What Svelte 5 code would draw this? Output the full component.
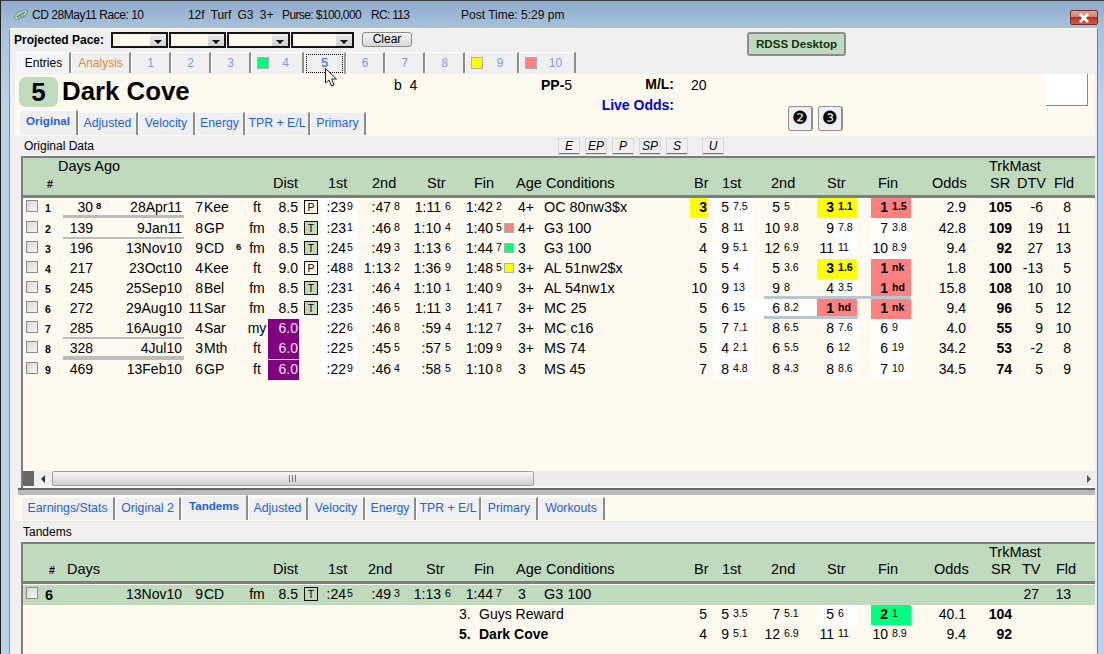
<script>
  const mainTabs = [
    { t: 'Entries', w: 54, c: 'blk' }, { t: 'Analysis', w: 60, c: 'org' },
    { t: '1', w: 40 }, { t: '2', w: 40 }, { t: '3', w: 40 },
    { t: '4', w: 53, s: 'g' }, { t: '5', w: 42, c: 'cur' }, { t: '6', w: 39 },
    { t: '7', w: 40 }, { t: '8', w: 40 }, { t: '9', w: 54, s: 'y' }, { t: '10', w: 57, s: 'r' }
  ];
  const subTabs = [
    { t: 'Original', w: 59, on: true }, { t: 'Adjusted', w: 60 }, { t: 'Velocity', w: 57 },
    { t: 'Energy', w: 50 }, { t: 'TPR + E/L', w: 65 }, { t: 'Primary', w: 56 }
  ];
  const lowTabs = [
    { t: 'Earnings/Stats', w: 94 }, { t: 'Original 2', w: 66 }, { t: 'Tandems', w: 67, on: true },
    { t: 'Adjusted', w: 60 }, { t: 'Velocity', w: 57 }, { t: 'Energy', w: 51 },
    { t: 'TPR + E/L', w: 65 }, { t: 'Primary', w: 57 }, { t: 'Workouts', w: 67 }
  ];
  const paceBtns = ['E', 'EP', 'P', 'SP', 'S', 'U'];
  const head1 = ['Dist', '1st', '2nd', 'Str', 'Fin', 'Age', 'Conditions', 'Br', '1st', '2nd', 'Str', 'Fin', 'Odds', 'SR', 'DTV', 'Fld'];
  const head2 = ['Days', 'Dist', '1st', '2nd', 'Str', 'Fin', 'Age', 'Conditions', 'Br', '1st', '2nd', 'Str', 'Fin', 'Odds', 'SR', 'TV', 'Fld'];

  const rows = [
    { n: 1, d: '30', ds: '8', date: '28Apr11', rn: '7', trk: 'Kee', surf: 'ft', dist: '8.5', box: 'P', t: [':23', '9', ':47', '8', '1:11', '6', '1:42', '2'], age: '4+', cond: 'OC 80nw3$x', br: '3', brc: 'y', p1: ['5', '7.5'], p2: ['5', '5'], p3: ['3', '1.1', 'y'], p4: ['1', '1.5', 'r'], odds: '2.9', sr: '105', dtv: '-6', fld: '8', bar: 'bar3' },
    { n: 2, d: '139', date: '9Jan11', rn: '8', trk: 'GP', surf: 'fm', dist: '8.5', box: 'T', t: [':23', '1', ':46', '8', '1:10', '4', '1:40', '5'], sw: 'r', age: '4+', cond: 'G3 100', br: '5', p1: ['8', '11'], p2: ['10', '9.8'], p3: ['9', '7.8'], p4: ['7', '3.8'], odds: '42.8', sr: '109', dtv: '19', fld: '11', bar: 'bar2', gap: true },
    { n: 3, d: '196', date: '13Nov10', rn: '9', trk: 'CD', ts: '6', surf: 'fm', dist: '8.5', box: 'T', t: [':24', '5', ':49', '3', '1:13', '6', '1:44', '7'], sw: 'g', age: '3', cond: 'G3 100', br: '4', p1: ['9', '5.1'], p2: ['12', '6.9'], p3: ['11', '11'], p4: ['10', '8.9'], odds: '9.4', sr: '92', dtv: '27', fld: '13' },
    { n: 4, d: '217', date: '23Oct10', rn: '4', trk: 'Kee', surf: 'ft', dist: '9.0', box: 'P', t: [':48', '8', '1:13', '2', '1:36', '9', '1:48', '5'], sw: 'y', age: '3+', cond: 'AL 51nw2$x', br: '5', p1: ['5', '4'], p2: ['5', '3.6'], p3: ['3', '1.6', 'y'], p4: ['1', 'nk', 'r'], odds: '1.8', sr: '100', dtv: '-13', fld: '5' },
    { n: 5, d: '245', date: '25Sep10', rn: '8', trk: 'Bel', surf: 'fm', dist: '8.5', box: 'T', t: [':23', '1', ':46', '4', '1:10', '1', '1:40', '9'], age: '3+', cond: 'AL 54nw1x', br: '10', p1: ['9', '13'], p2: ['9', '8'], p3: ['4', '3.5'], p4: ['1', 'hd', 'r'], odds: '15.8', sr: '108', dtv: '10', fld: '10', sbar: 'sbar1' },
    { n: 6, d: '272', date: '29Aug10', rn: '11', trk: 'Sar', surf: 'fm', dist: '8.5', box: 'T', t: [':23', '5', ':46', '5', '1:11', '3', '1:41', '7'], age: '3+', cond: 'MC 25', br: '5', p1: ['6', '15'], p2: ['6', '8.2', 'w'], p3: ['1', 'hd', 'r'], p4: ['1', 'nk', 'r'], odds: '9.4', sr: '96', dtv: '5', fld: '12', sbar: 'sbar2' },
    { n: 7, d: '285', date: '16Aug10', rn: '4', trk: 'Sar', surf: 'my', dist: '6.0', t: [':22', '6', ':46', '8', ':59', '4', '1:12', '7'], age: '3+', cond: 'MC c16', br: '5', p1: ['7', '7.1'], p2: ['8', '6.5'], p3: ['8', '7.6'], p4: ['6', '9'], odds: '4.0', sr: '55', dtv: '9', fld: '10', bar: 'bar2' },
    { n: 8, d: '328', date: '4Jul10', rn: '3', trk: 'Mth', surf: 'ft', dist: '6.0', t: [':22', '5', ':45', '5', ':57', '5', '1:09', '9'], age: '3+', cond: 'MS 74', br: '5', p1: ['4', '2.1'], p2: ['6', '5.5'], p3: ['6', '12'], p4: ['6', '19'], odds: '34.2', sr: '53', dtv: '-2', fld: '8', bar: 'bar4' },
    { n: 9, d: '469', date: '13Feb10', rn: '6', trk: 'GP', surf: 'ft', dist: '6.0', t: [':22', '9', ':46', '4', ':58', '5', '1:10', '8'], age: '3', cond: 'MS 45', br: '7', p1: ['8', '4.8'], p2: ['8', '4.3'], p3: ['8', '8.6'], p4: ['7', '10'], odds: '34.5', sr: '74', dtv: '5', fld: '9', gap: true }
  ];

  const tandem = { n: 6, date: '13Nov10', rn: '9', trk: 'CD', surf: 'fm', dist: '8.5', box: 'T', t: [':24', '5', ':49', '3', '1:13', '6', '1:44', '7'], age: '3', cond: 'G3 100', dtv: '27', fld: '13' };
  const others = [
    { pos: '3.', name: 'Guys Reward', br: '5', p1: ['5', '3.5'], p2: ['7', '5.1'], p3: ['5', '6', 'w'], p4: ['2', '1', 'g'], odds: '40.1', sr: '104' },
    { pos: '5.', name: 'Dark Cove', bold: true, br: '4', p1: ['9', '5.1'], p2: ['12', '6.9'], p3: ['11', '11'], p4: ['10', '8.9'], odds: '9.4', sr: '92' }
  ];
</script>

{#snippet pair(v, mainC, supC)}
  <div class={'r-al ' + (v[2] && v[2] !== 'w' ? v[2] + ' hi' : v[2] === 'w' ? 'w' : mainC)}>{v[0]}</div>
  <div class={'sup ' + (v[2] && v[2] !== 'w' ? v[2] + (v[2] === 'g' ? '' : ' shi') : v[2] === 'w' ? 'w' : supC)}>{v[1]}</div>
{/snippet}

{#snippet times(t, sw)}
  <div class="r-al w">{t[0]}</div><div class="sup w t1s">{t[1]}</div>
  <div class="r-al">{t[2]}</div><div class="sup t2s">{t[3]}</div>
  <div class="r-al">{t[4]}</div><div class="sup t3s">{t[5]}</div>
  <div class="r-al">{t[6]}</div><div class="sup t2s">{t[7]}</div>
  <div class="swcell">{#if sw}<span class={'swatch ' + sw}></span>{/if}</div>
{/snippet}

<div class="win">
  <div class="titlebar">
    <svg class="appicon" width="16" height="13" viewBox="0 0 16 13" aria-hidden="true">
      <ellipse cx="8" cy="6.5" rx="7.5" ry="3.2" transform="rotate(-30 8 6.5)" fill="#b9d3b4" stroke="#4f8f4c" stroke-width="1" stroke-dasharray="2 1" />
      <path d="M4 9 L12 4" stroke="#4a6fc0" stroke-width="1.4" />
      <path d="M6 10 L11 7" stroke="#5f9c5f" stroke-width="1" />
    </svg>
    <span class="t1">CD 28May11 Race: 10</span>
    <span class="t2">12f&nbsp; Turf&nbsp; G3&nbsp; 3+</span>
    <span class="t3">Purse: $100,000</span>
    <span class="t4">RC: 113</span>
    <span class="t5">Post Time: 5:29 pm</span>
    <div class="close">
      <svg width="14" height="10" viewBox="0 0 14 10" aria-hidden="true"><path d="M3 1 L11 9 M11 1 L3 9" stroke="#fff" stroke-width="2.6" /></svg>
    </div>
  </div>

  <div class="frame">
    <div class="pace">
      <span class="pace-label">Projected Pace:</span>
      <div class="combo c1"><i></i></div>
      <div class="combo c2"><i></i></div>
      <div class="combo c3"><i></i></div>
      <div class="combo c4"><i></i></div>
      <div class="clear">Clear</div>
      <div class="rdss">RDSS Desktop</div>
    </div>

    <div class="maintabs">
      {#each mainTabs as tab}
        <div class={'mtab ' + (tab.c || '')} style={`width:${tab.w}px`}>
          {#if tab.s}<span class={'swatch big ' + tab.s}></span>{/if}
          {#if tab.c === 'cur'}<span class="dots">{tab.t}</span>{:else}<span class="lbl">{tab.t}</span>{/if}
        </div>
      {/each}
    </div>

    <div class="cream top">
      <div class="hdr">
        <div class="numbox">5</div>
        <div class="hname">Dark Cove</div>
        <div class="hb">b&nbsp; 4</div>
        <div class="hpp"><b>PP-</b>5</div>
        <div class="hlabels"><b>M/L:</b><b class="live">Live Odds:</b></div>
        <div class="hml">20</div>
        <div class="whitebox"></div>
      </div>
      <div class="subrow">
        {#each subTabs as tab}
          <div class={'stab ' + (tab.on ? 'on' : '')} style={`width:${tab.w}px`}>{tab.t}</div>
        {/each}
        <div class="circ first">❷</div>
        <div class="circ">❸</div>
      </div>
    </div>

    <div class="strip">
      <span class="strip-l">Original Data</span>
      <div class="pbtns">
        {#each paceBtns as b}<div class={'pbtn ' + (b === 'U' ? 'u' : '')}>{b}</div>{/each}
      </div>
    </div>

    <div class="table">
      <div class="head head-a">
        <div class="dago">Days Ago</div>
        <div class="trk-m">TrkMast</div>
        <div class="sp"></div>
        <div class="hash">#</div>
        <div class="sp"></div>
        {#each head1 as h}<div>{h}</div>{/each}
      </div>
      <div class="body">
        {#each rows as r}
          <div class={'row ' + (r.gap ? 'gapt' : '')}>
            <div class="chkc"><span class="chk"></span></div>
            <div class="rn">{r.n}</div>
            <div class="r-al">{r.d}</div>
            <div class="dsup">{r.ds || ''}</div>
            <div class="r-al">{r.date}</div>
            <div class="r-al">{r.rn}</div>
            <div class="trk">{r.trk}</div>
            <div class="dsup tsup">{r.ts || ''}</div>
            <div class="ctr">{r.surf}</div>
            <div class={'r-al dist ' + (r.dist === '6.0' ? 'purple' : '')}>{r.dist}</div>
            <div class="boxc">{#if r.box}<span class={'box ' + r.box}>{r.box}</span>{/if}</div>
            {@render times(r.t, r.sw)}
            <div class="age">{r.age}</div>
            <div class="cond">{r.cond}</div>
            <div class={'r-al ' + (r.brc ? r.brc + ' hi' : '')}>{r.br}</div>
            <div></div>
            {@render pair(r.p1, 'w', 'w')}
            {@render pair(r.p2, '', '')}
            {@render pair(r.p3, '', 'w')}
            <div></div>
            {@render pair(r.p4, 'w', 'w')}
            <div class="r-al">{r.odds}</div>
            <div class="r-al hi">{r.sr}</div>
            <div class="r-al">{r.dtv}</div>
            <div class="r-al">{r.fld}</div>
            {#if r.bar}<span class={'bar ' + r.bar}></span>{/if}
            {#if r.sbar}<span class={'sbar ' + r.sbar}></span>{/if}
          </div>
        {/each}
      </div>
      <div class="hscroll">
        <div class="corner"></div>
        <div class="sbtn"><i class="arrow-l"></i></div>
        <div class="thumb"><span class="grip"></span></div>
        <div class="track"><i class="arrow-r"></i></div>
      </div>
    </div>

    <div class="split"></div>

    <div class="cream low">
      {#each lowTabs as tab}
        <div class={'stab ltab ' + (tab.on ? 'on' : '')} style={`width:${tab.w}px`}>{tab.t}</div>
      {/each}
    </div>

    <div class="strip s2"><span class="strip-l l2">Tandems</span></div>

    <div class="table t-low">
      <div class="head head-b">
        <div class="trk-m tm2">TrkMast</div>
        <div class="sp"></div>
        <div class="hash">#</div>
        {#each head2 as h}<div>{h}</div>{/each}
      </div>
      <div class="body body2">
        <div class="row grn">
          <div class="chkc"><span class="chk"></span></div>
          <div class="rn big">{tandem.n}</div>
          <div></div><div></div>
          <div class="r-al">{tandem.date}</div>
          <div class="r-al">{tandem.rn}</div>
          <div class="trk">{tandem.trk}</div>
          <div></div>
          <div class="ctr">{tandem.surf}</div>
          <div class="r-al dist">{tandem.dist}</div>
          <div class="boxc"><span class="box plain">{tandem.box}</span></div>
          <div class="r-al">{tandem.t[0]}</div><div class="sup t1s">{tandem.t[1]}</div>
          <div class="r-al">{tandem.t[2]}</div><div class="sup t2s">{tandem.t[3]}</div>
          <div class="r-al">{tandem.t[4]}</div><div class="sup t3s">{tandem.t[5]}</div>
          <div class="r-al">{tandem.t[6]}</div><div class="sup t2s">{tandem.t[7]}</div>
          <div></div>
          <div class="age">{tandem.age}</div>
          <div class="cond">{tandem.cond}</div>
          <div class="tv">{tandem.dtv}</div>
          <div class="r-al flds">{tandem.fld}</div>
        </div>
        {#each others as o}
          <div class={'row ' + (o.bold ? 'boldname' : '')}>
            <div class="hname2"><span class="pos">{o.pos}</span>{o.name}</div>
            <div class="r-al brs">{o.br}</div>
            <div></div>
            {@render pair(o.p1, '', '')}
            {@render pair(o.p2, '', '')}
            {@render pair(o.p3, '', '')}
            <div></div>
            {@render pair(o.p4, '', '')}
            <div class="r-al oddc">{o.odds}</div>
            <div class="r-al hi">{o.sr}</div>
          </div>
        {/each}
      </div>
    </div>
  </div>

  <svg class="cursor" width="14" height="20" viewBox="0 0 14 20" aria-hidden="true">
    <path d="M0.5 0.5 L0.5 15 L4 12 L6.5 18 L9 17 L6.7 11 L11.5 11 Z" fill="#fff" stroke="#222" stroke-width="1" />
  </svg>
</div>

<style>
  :global(body) { margin: 0; }
  .win {
    position: relative;
    width: 1104px;
    height: 654px;
    box-sizing: border-box;
    overflow: hidden;
    border-left: 1px solid #222;
    border-top: 1px solid #3a3f48;
    background: linear-gradient(#8fabcb 0, #a9c3de 28px, #b9d1ea 100px);
    font-family: "Liberation Sans", Arial, sans-serif;
    color: #000;
    display: flex;
    flex-direction: column;
  }
  .titlebar {
    height: 27px;
    flex: none;
    display: flex;
    align-items: center;
    font-size: 12px;
    white-space: nowrap;
    color: #0a0a0a;
  }
  .appicon { margin-left: 12px; width: 16px; flex: none; }
  .t1 { margin-left: 3px; width: 156px; letter-spacing: -0.47px; }
  .t2 { width: 94px; letter-spacing: -0.1px; }
  .t3 { width: 89px; letter-spacing: -0.6px; }
  .t4 { width: 90px; letter-spacing: -0.7px; }
  .t5 { width: 230px; }
  .close {
    margin-left: auto;
    margin-right: 6px;
    margin-top: 6px;
    width: 28px;
    height: 15px;
    box-sizing: border-box;
    border: 1px solid #7f2a22;
    border-radius: 2px;
    background: linear-gradient(#dfa79f 0, #cf7f75 45%, #bd2f20 50%, #c9604f 100%);
    display: flex;
    align-items: center;
    justify-content: center;
  }
  .frame {
    flex: 1;
    min-height: 0;
    margin: 0 6px 0 8px;
    background: #f0f0f0;
    border-left: 1px solid #8d8d8d;
    border-right: 1px solid #7c7c7c;
    border-top: 1px solid #fff;
    display: flex;
    flex-direction: column;
  }
  .pace {
    height: 23px;
    flex: none;
    box-sizing: border-box;
    padding: 3px 0 0 4px;
    display: flex;
    align-items: flex-start;
  }
  .pace-label { width: 97px; font-size: 12px; font-weight: bold; line-height: 17px; white-space: nowrap; }
  .combo {
    height: 16px;
    box-sizing: border-box;
    border: 2px solid #151515;
    background: #fff9ee;
    margin-right: 1px;
    display: flex;
    justify-content: flex-end;
  }
  .combo i {
    display: block;
    width: 16px;
    height: 12px;
    background: linear-gradient(#eee, #cfcfcf);
    position: relative;
  }
  .combo i::after {
    content: "";
    position: absolute;
    left: 4px;
    top: 6px;
    border: 4px solid transparent;
    border-top: 4px solid #000;
    border-bottom: 0;
  }
  .c1, .c2 { width: 57px; }
  .c3 { width: 63px; }
  .c4 { width: 63px; }
  .clear {
    margin-left: 7px;
    width: 50px;
    height: 15px;
    box-sizing: border-box;
    border: 1px solid #8a8a8a;
    border-radius: 3px;
    background: linear-gradient(#f4f4f4, #d8d8d8);
    font-size: 12px;
    line-height: 13px;
    text-align: center;
  }
  .rdss {
    margin-left: 335px;
    width: 99px;
    height: 24px;
    box-sizing: border-box;
    border: 2px solid #8d8d8d;
    border-radius: 3px;
    background: #bfdabd;
    font-size: 11.6px;
    font-weight: bold;
    color: #16300f;
    line-height: 20px;
    text-align: center;
    position: relative;
    z-index: 1;
  }
  .maintabs {
    height: 22px;
    flex: none;
    padding-left: 7px;
    display: flex;
    box-sizing: border-box;
  }
  .mtab {
    height: 21px;
    box-sizing: border-box;
    border-right: 2px solid #8c8c8c;
    border-top: 1px solid #fff;
    border-left: 1px solid #fff;
    background: #f0f0f0;
    font-size: 12px;
    color: #7b9cf0;
    display: flex;
    align-items: center;
  }
  .mtab .lbl { flex: 1; text-align: center; }
  .mtab.blk { color: #000; background: #f5f5f5; }
  .mtab.org { color: #e8873a; }
  .mtab.cur { height: 22px; border-top: 1px solid #fff; padding: 0 1px 1px 1px; border-right-color: #9c9c9c; }
  .dots {
    flex: 1;
    height: 19px;
    box-sizing: border-box;
    border: 1px dotted #000;
    text-align: center;
    font-size: 13px;
    font-weight: bold;
    line-height: 15px;
    color: #5c84e6;
  }
  .swatch {
    display: block;
    flex: none;
    width: 10px;
    height: 10px;
    box-sizing: border-box;
    border: 1px solid #b0b0b0;
  }
  .swatch.big { width: 12px; height: 12px; margin-left: 5px; }
  .cream { background: #fffaf0; margin: 0 2px 0 5px; flex: none; }
  .cream.top { height: 62px; }
  .hdr {
    height: 36px;
    overflow: hidden;
    display: flex;
    align-items: flex-start;
  }
  .numbox {
    margin: 3px 0 0 4px;
    width: 39px;
    height: 30px;
    border-radius: 7px;
    background: #bfdcbf;
    font-size: 26px;
    font-weight: bold;
    text-align: center;
    line-height: 30px;
    flex: none;
  }
  .hname { margin-left: 4px; width: 332px; font-size: 25.8px; font-weight: bold; line-height: 35px; white-space: nowrap; }
  .hb { width: 147px; font-size: 14px; line-height: 22px; }
  .hpp { width: 57px; font-size: 14px; line-height: 22px; }
  .hlabels {
    width: 76px;
    display: flex;
    flex-direction: column;
    align-items: flex-end;
    font-size: 14px;
    line-height: 21px;
    white-space: nowrap;
  }
  .live { color: #0000e0; }
  .hml { margin-left: 17px; width: 355px; font-size: 14px; line-height: 22px; }
  .whitebox {
    width: 42px;
    height: 32px;
    flex: none;
    box-sizing: border-box;
    background: #fff;
    border-right: 1px solid #888;
    border-bottom: 1px solid #888;
  }
  .subrow { height: 26px; display: flex; align-items: flex-end; padding-left: 4px; }
  .stab {
    height: 23px;
    margin-bottom: 1px;
    box-sizing: border-box;
    border-right: 2px solid #8c8c8c;
    border-top: 1px solid #fff;
    border-left: 1px solid #fff;
    background: #f0f0f0;
    font-size: 12.3px;
    color: #1f5fe8;
    text-align: center;
    line-height: 21px;
    white-space: nowrap;
  }
  .stab.on { height: 25px; font-weight: bold; font-size: 11.6px; line-height: 19px; }
  .circ {
    width: 25px;
    height: 25px;
    box-sizing: border-box;
    margin: 0 5px 1px 0;
    border: 1px solid #909090;
    border-right-width: 2px;
    border-radius: 3px;
    background: #f0f0f0;
    font-family: "DejaVu Sans", sans-serif;
    font-size: 18px;
    line-height: 22px;
    text-align: center;
    align-self: flex-start;
    margin-top: -4px;
  }
  .circ.first { margin-left: 422px; }
  .strip {
    height: 20px;
    flex: none;
    display: flex;
    align-items: center;
    padding-left: 14px;
    font-size: 12px;
  }
  .strip-l { width: 534px; }
  .l2 { margin-left: -1px; }
  .pbtns { display: flex; gap: 5px; }
  .pbtn {
    width: 22px;
    height: 17px;
    box-sizing: border-box;
    border: 1px solid #fff;
    border-right: 1px solid #777;
    border-bottom: 2px solid #777;
    outline: 1px solid #d8d8d8;
    outline-offset: -1px;
    font-style: italic;
    font-size: 12px;
    line-height: 14px;
    text-align: center;
  }
  .pbtn.u { margin-left: 9px; }
  .table {
    margin-left: 11px;
    margin-right: 2px;
    flex: none;
    border-left: 2px solid #7e7e7e;
    background: #fffaf0;
  }
  .head {
    background: #bfdabd;
    border-top: 2px solid #7e7e7e;
    border-bottom: 3px solid #7e7e7e;
    height: 37px;
    display: grid;
    grid-template-rows: 17px 18px;
    font-size: 14.5px;
    line-height: 17px;
    white-space: nowrap;
    align-content: start;
  }
  .head > div { grid-row: 2; }
  .head-a { grid-template-columns: 24px 11px 215px 55px 44px 55px 47px 42px 30px 148px 28px 49px 56px 51px 54px 58px 27px 37px 41px; }
  .head-b { grid-template-columns: 26px 18px 206px 55px 40px 58px 48px 42px 30px 148px 28px 49px 56px 51px 56px 57px 31px 34px 39px; }
  .head > .dago { grid-row: 1; grid-column: 3 / span 3; }
  .head > .trk-m { grid-row: 1; grid-column: 17 / span 3; margin-left: -1px; }
  .head > .tm2 { margin-left: -2px; }
  .hash { font-size: 10.5px; font-weight: bold; line-height: 19px; }
  .body { height: 273px; }
  .body2 { height: 71px; }
  .row {
    position: relative;
    height: 20px;
    display: grid;
    grid-template-columns: 21px 14px 35px 11px 78px 21px 32px 11px 22px 31px 22px 25px 11px 34px 17px 33px 18px 34px 11px 12px 28px 146px 17px 6px 16px 24px 27px 37px 17px 23px 14px 17px 23px 55px 46px 31px 28px 24px;
    font-size: 14px;
    line-height: 19px;
    white-space: nowrap;
  }
  .row > div { min-width: 0; }
  .gapt { margin-top: 1px; }
  .r-al { text-align: right; }
  .ctr { text-align: center; }
  .w { background: #fff; }
  .y { background: #ffff00; }
  .r { background: #ff8080; }
  .g { background: #00ff7f; }
  .hi { font-weight: bold; }
  .sup { font-size: 10.6px; line-height: 16px; padding-left: 4px; overflow: visible; }
  .shi { font-weight: bold; }
  .t1s { padding-left: 1px; }
  .t2s { padding-left: 3px; }
  .t3s { padding-left: 4px; }
  .dsup { font-size: 9.5px; font-weight: bold; line-height: 15px; padding-left: 3px; }
  .tsup { padding-left: 0; margin-left: 1px; }
  .trk { padding-left: 1px; }
  .dist { padding-right: 1px; }
  .purple { background: #800080; color: #f2e2f2; }
  .chkc { padding: 2px 0 0 3px; }
  .chk {
    display: block;
    width: 12px;
    height: 12px;
    box-sizing: border-box;
    border: 1px solid #8a8a8a;
    background: linear-gradient(135deg, #d8d8d8, #f6f6f6);
  }
  .rn { font-size: 10.5px; font-weight: bold; line-height: 20px; padding-left: 1px; }
  .rn.big { font-size: 14.5px; }
  .boxc { padding: 2px 0 0 5px; }
  .box {
    display: block;
    width: 14px;
    height: 14px;
    box-sizing: border-box;
    border: 1px solid #111;
    font-size: 10.5px;
    line-height: 12px;
    text-align: center;
    background: #fffaf0;
  }
  .box.T { background: #bfdabd; }
  .box.plain { background: transparent; }
  .swcell { display: flex; align-items: center; height: 18px; }
  .age { padding-left: 2px; }
  .cond { white-space: nowrap; font-size: 14.4px; }
  .bar { position: absolute; left: 40px; width: 121px; background: #bcbcbc; }
  .bar3 { height: 3px; bottom: 0; }
  .bar2 { height: 2px; bottom: 0; }
  .bar4 { height: 4px; bottom: -1px; }
  .sbar { position: absolute; left: 741px; height: 3px; bottom: 0; background: #b9c6d2; }
  .sbar1 { width: 147px; }
  .sbar2 { width: 94px; }
  .hscroll { height: 15px; display: flex; background: #ededed; margin-bottom: 2px; }
  .corner { width: 11px; background: #666; }
  .sbtn { width: 18px; display: flex; align-items: center; justify-content: center; background: #f0f0f0; }
  .arrow-l { display: block; border: 4px solid transparent; border-left: 0; border-right: 4px solid #333; }
  .arrow-r { display: block; margin-left: auto; margin-right: 4px; border: 4px solid transparent; border-right: 0; border-left: 4px solid #555; }
  .thumb {
    width: 482px;
    box-sizing: border-box;
    border: 1px solid #a0a0a0;
    border-radius: 2px;
    background: linear-gradient(#f6f6f6, #d0d0d0);
    display: flex;
    align-items: center;
    justify-content: center;
  }
  .grip { width: 8px; height: 7px; background: repeating-linear-gradient(90deg, #777 0 1px, transparent 1px 3px); }
  .track { flex: 1; display: flex; align-items: center; }
  .split {
    height: 7px;
    flex: none;
    margin: 0 2px 0 8px;
    box-sizing: border-box;
    border-top: 2px solid #666;
    background: #bbb;
  }
  .cream.low { height: 27px; display: flex; align-items: flex-end; padding-left: 6px; box-sizing: border-box; border-bottom: 1px solid #e8e8e8; }
  .ltab { height: 23px; margin-bottom: 1px; }
  .ltab.on { height: 25px; }
  .s2 { height: 20px; }
  .t-low { flex: 1; min-height: 0; overflow: hidden; }
  .grn { background: #bfdabd; margin-top: 1px; }
  .tv { grid-column: 36; text-align: right; padding-right: 4px; }
  .flds { grid-column: 37; }
  .hname2 { grid-column: 18 / span 5; }
  .pos { display: inline-block; width: 20px; }
  .boldname .hname2 { font-weight: bold; }
  .brs { grid-column: 23; }
  .oddc { grid-column: 34; }
  .cursor { position: absolute; left: 324px; top: 67px; }
</style>
